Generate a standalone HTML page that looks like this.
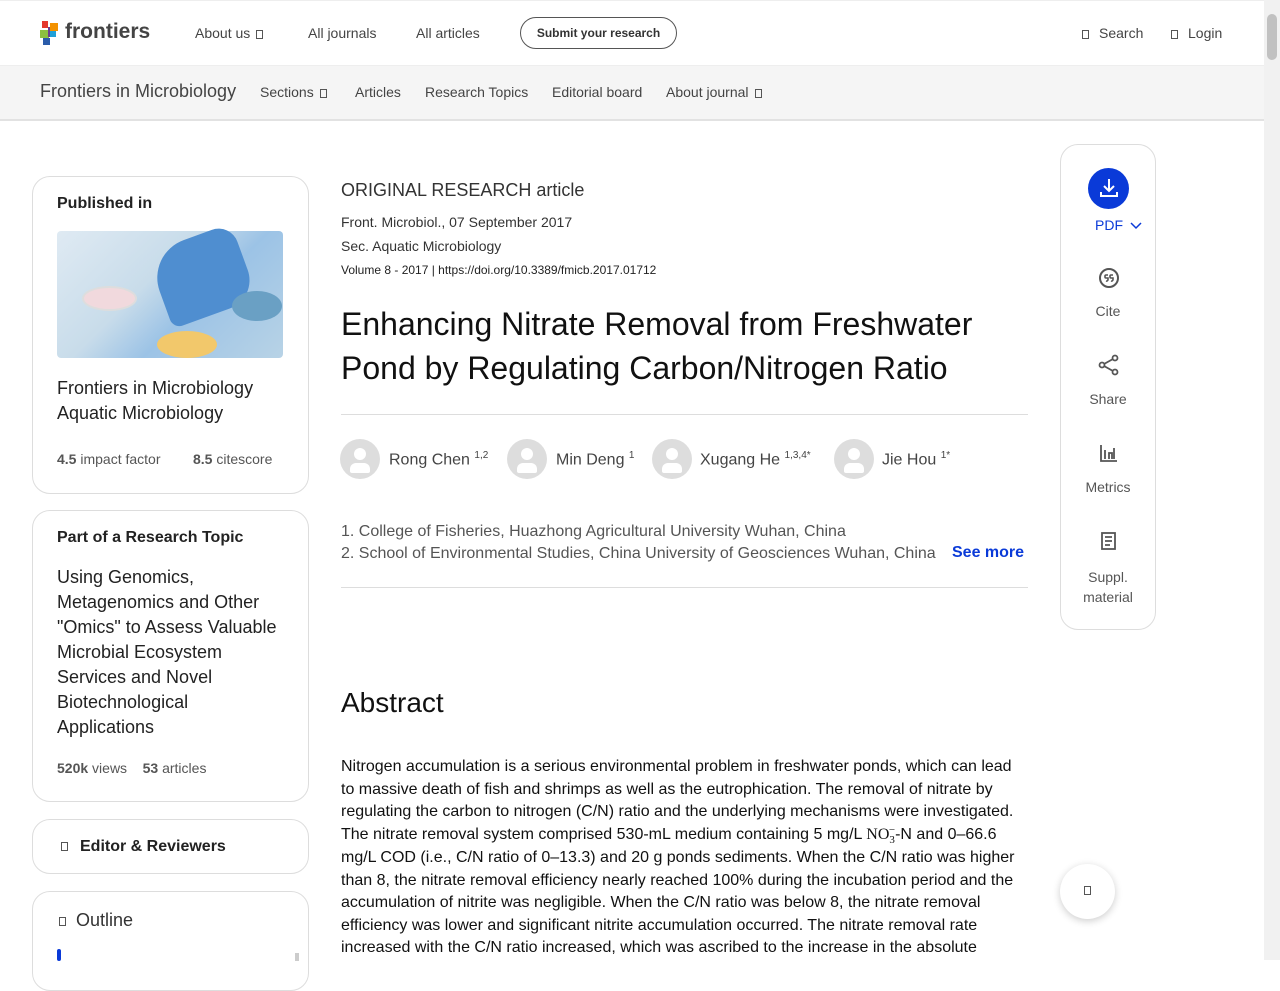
<!DOCTYPE html>
<html><head><meta charset="utf-8"><style>
*{box-sizing:border-box;margin:0;padding:0}
body{width:1280px;height:960px;overflow:hidden;background:#fff;font-family:"Liberation Sans",Arial,sans-serif;color:#222;position:relative}
.a{position:absolute;white-space:nowrap}
.box{position:absolute;border:1px solid #ddd;border-radius:18px;background:#fff}
.tb{font-size:14px;color:#444}
.sq{display:inline-block;width:7px;height:9px;border:1px solid #555;vertical-align:middle;margin-left:6px}
.av{position:absolute;width:40px;height:40px;border-radius:50%;background:#ddd;overflow:hidden}
.av:before{content:"";position:absolute;left:14px;top:9px;width:12px;height:12px;border-radius:50%;background:#fff}
.av:after{content:"";position:absolute;left:10px;top:24px;width:20px;height:10px;border-radius:6px 6px 2px 2px;background:#fff}
.an{font-size:16px;color:#444}
.an sup{font-size:10px}
.ic{font-size:14px;color:#555;text-align:center;width:96px}
</style></head><body>
<div class="a" style="left:0;top:0;width:1264px;height:66px;border-bottom:1px solid #eee;border-top:1px solid #eee"></div>
<svg class="a" style="left:40px;top:21px" width="22" height="24"><rect x="2" y="0" width="6" height="7" fill="#e4372d"/><rect x="10" y="2" width="8" height="8" fill="#f39200"/><rect x="0" y="9" width="9" height="8" fill="#8cbf3f"/><rect x="9" y="10" width="7" height="6" fill="#1fa0d8"/><rect x="3" y="17" width="7" height="7" fill="#2a5caa"/><rect x="8" y="6" width="2" height="10" fill="#6b3d8f"/></svg>
<div class="a" style="left:65px;top:20px;font-size:21px;font-weight:bold;color:#444">frontiers</div>
<div class="a tb" style="left:195px;top:25px">About us<span class="sq"></span></div>
<div class="a tb" style="left:308px;top:25px">All journals</div>
<div class="a tb" style="left:416px;top:25px">All articles</div>
<div class="a" style="left:520px;top:17px;width:157px;height:32px;border:1px solid #555;border-radius:16px;font-size:12px;font-weight:bold;color:#333;text-align:center;line-height:30px">Submit your research</div>
<div class="a tb" style="left:1082px;top:25px"><span class="sq" style="margin:0 10px 0 0"></span>Search</div>
<div class="a tb" style="left:1171px;top:25px"><span class="sq" style="margin:0 10px 0 0"></span>Login</div>
<div class="a" style="left:1264px;top:0;width:16px;height:960px;background:#f1f1f1"></div>
<div class="a" style="left:1267px;top:14px;width:10px;height:46px;background:#c1c1c1;border-radius:5px"></div>
<div class="a" style="left:0;top:66px;width:1264px;height:55px;background:#f5f5f5;border-bottom:2px solid #e2e2e2"></div>
<div class="a" style="left:40px;top:81px;font-size:18px;color:#444">Frontiers in Microbiology</div>
<div class="a tb" style="left:260px;top:84px">Sections<span class="sq"></span></div>
<div class="a tb" style="left:355px;top:84px">Articles</div>
<div class="a tb" style="left:425px;top:84px">Research Topics</div>
<div class="a tb" style="left:552px;top:84px">Editorial board</div>
<div class="a tb" style="left:666px;top:84px">About journal<span class="sq"></span></div>
<div class="box" style="left:32px;top:176px;width:277px;height:318px"></div>
<div class="a" style="left:57px;top:195px;font-size:16px;font-weight:bold">Published in</div>
<div class="a" style="left:57px;top:231px;width:226px;height:127px;border-radius:4px;background:linear-gradient(135deg,#dfeaf3 0%,#c8dcea 40%,#9cc3e6 60%,#b8d3e6 100%)">
<div class="a" style="left:100px;top:5px;width:90px;height:80px;border-radius:40px 20px 30px 10px;background:#4f8ed0;transform:rotate(-20deg)"></div>
<div class="a" style="left:25px;top:55px;width:55px;height:25px;border-radius:50%;border:2px solid #ddd;background:#f1d9dd"></div>
<div class="a" style="left:100px;top:100px;width:60px;height:27px;border-radius:50%;background:#f2c86b"></div>
<div class="a" style="left:175px;top:60px;width:50px;height:30px;border-radius:50%;background:#6aa0c4"></div>
</div>
<div class="a" style="left:57px;top:376px;font-size:18px;line-height:25px;color:#222">Frontiers in Microbiology<br>Aquatic Microbiology</div>
<div class="a" style="left:57px;top:451px;font-size:14px;color:#555"><b>4.5</b> impact factor</div>
<div class="a" style="left:193px;top:451px;font-size:14px;color:#555"><b>8.5</b> citescore</div>
<div class="box" style="left:32px;top:510px;width:277px;height:292px"></div>
<div class="a" style="left:57px;top:529px;font-size:16px;font-weight:bold">Part of a Research Topic</div>
<div class="a" style="left:57px;top:565px;font-size:18px;line-height:25px;color:#222">Using Genomics,<br>Metagenomics and Other<br>"Omics" to Assess Valuable<br>Microbial Ecosystem<br>Services and Novel<br>Biotechnological<br>Applications</div>
<div class="a" style="left:57px;top:760px;font-size:14px;color:#555"><b>520k</b> views &nbsp;&nbsp;&nbsp;<b>53</b> articles</div>
<div class="box" style="left:32px;top:819px;width:277px;height:55px"></div>
<div class="a" style="left:61px;top:838px;font-size:16px;font-weight:bold"><span class="sq" style="margin:0 12px 0 0"></span>Editor &amp; Reviewers</div>
<div class="box" style="left:32px;top:891px;width:277px;height:100px"></div>
<div class="a" style="left:59px;top:910px;font-size:18px;color:#333"><span class="sq" style="margin:0 10px 0 0"></span>Outline</div>
<div class="a" style="left:57px;top:949px;width:4px;height:12px;background:#0a3ad8;border-radius:2px"></div>
<div class="a" style="left:295px;top:953px;width:4px;height:8px;background:#ccc"></div>
<div class="a" style="left:341px;top:180px;font-size:18px;color:#333">ORIGINAL RESEARCH article</div>
<div class="a" style="left:341px;top:214px;font-size:14px;color:#333">Front. Microbiol., 07 September 2017</div>
<div class="a" style="left:341px;top:238px;font-size:14px;color:#333">Sec. Aquatic Microbiology</div>
<div class="a" style="left:341px;top:263px;font-size:12px;color:#222">Volume 8 - 2017 | https://doi.org/10.3389/fmicb.2017.01712</div>
<div class="a" style="left:341px;top:302px;font-size:32px;line-height:44px;color:#111">Enhancing Nitrate Removal from Freshwater<br>Pond by Regulating Carbon/Nitrogen Ratio</div>
<div class="a" style="left:341px;top:414px;width:687px;height:1px;background:#ddd"></div>
<div class="av" style="left:340px;top:439px"></div><div class="a an" style="left:389px;top:450px">Rong Chen <sup>1,2</sup></div>
<div class="av" style="left:507px;top:439px"></div><div class="a an" style="left:556px;top:450px">Min Deng <sup>1</sup></div>
<div class="av" style="left:652px;top:439px"></div><div class="a an" style="left:700px;top:450px">Xugang He <sup>1,3,4*</sup></div>
<div class="av" style="left:834px;top:439px"></div><div class="a an" style="left:882px;top:450px">Jie Hou <sup>1*</sup></div>
<div class="a" style="left:341px;top:521px;font-size:16px;line-height:22px;color:#555">1. College of Fisheries, Huazhong Agricultural University Wuhan, China<br>2. School of Environmental Studies, China University of Geosciences Wuhan, China</div>
<div class="a" style="left:952px;top:544px;font-size:16px;font-weight:bold;color:#0a3ad8">See more</div>
<div class="a" style="left:341px;top:587px;width:687px;height:1px;background:#ddd"></div>
<div class="a" style="left:341px;top:687px;font-size:28px;color:#111">Abstract</div>
<div class="a" style="left:341px;top:756px;width:678px;font-size:16px;line-height:22.5px;color:#111;white-space:normal">Nitrogen accumulation is a serious environmental problem in freshwater ponds, which can lead to massive death of fish and shrimps as well as the eutrophication. The removal of nitrate by regulating the carbon to nitrogen (C/N) ratio and the underlying mechanisms were investigated. The nitrate removal system comprised 530-mL medium containing 5 mg/L <span style="font-family:'Liberation Serif',serif">NO<span style="font-size:11px;position:relative;top:4px">3</span><span style="font-size:11px;position:relative;top:-6px;left:-6px;margin-right:-6px">−</span></span>-N and 0–66.6 mg/L COD (i.e., C/N ratio of 0–13.3) and 20 g ponds sediments. When the C/N ratio was higher than 8, the nitrate removal efficiency nearly reached 100% during the incubation period and the accumulation of nitrite was negligible. When the C/N ratio was below 8, the nitrate removal efficiency was lower and significant nitrite accumulation occurred. The nitrate removal rate increased with the C/N ratio increased, which was ascribed to the increase in the absolute</div>
<div class="box" style="left:1060px;top:144px;width:96px;height:486px"></div>
<div class="a" style="left:1088px;top:168px;width:41px;height:41px;border-radius:50%;background:#0a3ad8"></div>
<svg class="a" style="left:1098px;top:177px" width="22" height="22" fill="none" stroke="#fff" stroke-width="2"><path d="M11 2v12M6 9l5 5 5-5M3 15v4h16v-4"/></svg>
<div class="a" style="left:1095px;top:217px;font-size:14px;color:#0a3ad8">PDF <svg width="12" height="8" style="margin-left:3px"><path d="M1 1l5 5 5-5" fill="none" stroke="#0a3ad8" stroke-width="1.5"/></svg></div>
<svg class="a" style="left:1098px;top:267px" width="22" height="22" fill="none" stroke="#555" stroke-width="2"><circle cx="11" cy="11" r="9"/><path d="M10 8H8a1 1 0 0 0-1 1v1a1 1 0 0 0 1 1h2v1.5a1.5 1.5 0 0 1-2 1.5M15 8h-2a1 1 0 0 0-1 1v1a1 1 0 0 0 1 1h2v1.5a1.5 1.5 0 0 1-2 1.5" stroke-width="1.6"/></svg>
<div class="a ic" style="left:1060px;top:303px">Cite</div>
<svg class="a" style="left:1098px;top:354px" width="22" height="22" fill="none" stroke="#555" stroke-width="1.8"><circle cx="4" cy="11" r="2.5"/><circle cx="17" cy="4" r="2.5"/><circle cx="17" cy="18" r="2.5"/><path d="M6 10l9-5M6 12l9 5"/></svg>
<div class="a ic" style="left:1060px;top:391px">Share</div>
<svg class="a" style="left:1099px;top:444px" width="20" height="18" fill="none" stroke="#555" stroke-width="1.8"><path d="M2 1v16h16M6 15V6M10 15V9h3v6M15 15V4"/></svg>
<div class="a ic" style="left:1060px;top:479px">Metrics</div>
<svg class="a" style="left:1101px;top:532px" width="16" height="18" fill="none" stroke="#555" stroke-width="1.8"><rect x="1" y="1" width="13" height="16"/><path d="M4 5h7M4 9h7M4 13h5"/></svg>
<div class="a ic" style="left:1060px;top:567px;line-height:20px">Suppl.<br>material</div>
<div class="a" style="left:1060px;top:864px;width:55px;height:55px;border-radius:50%;background:#fff;box-shadow:0 2px 8px rgba(0,0,0,.2)"><span class="sq" style="position:absolute;left:24px;top:22px;margin:0"></span></div>
</body></html>
